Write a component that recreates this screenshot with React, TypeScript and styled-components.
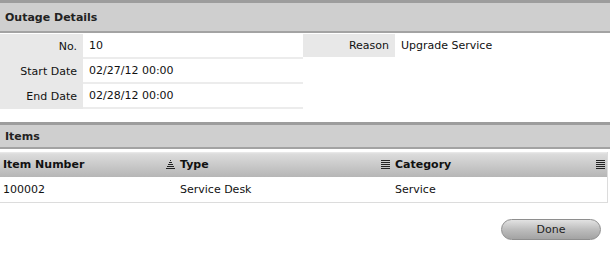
import { createGlobalStyle, styled } from "styled-components";

const GlobalStyle = createGlobalStyle`
    body {
        margin: 0;
        background: #fff;
        font-family: "DejaVu Sans", "Liberation Sans", sans-serif;
        font-size: 11px;
        color: #111;
    }
`;

const Page = styled.div`
    width: 610px;
`;

const Section = styled.section`
    margin-bottom: ${props => props.$gap || 0}px;
`;

const SectionHeader = styled.div`
    height: ${props => props.$height || 28}px;
    border-top: 3px solid #9d9d9d;
    border-bottom: 2px solid #a3a3a3;
    background: #cfcfcf;
    display: flex;
    align-items: center;
    padding-left: 5px;
    font-weight: bold;
    font-size: 11px;
    color: #222;
`;

const Details = styled.div`
    padding-top: 1px;
`;

const DetailRow = styled.div`
    display: grid;
    grid-template-columns: 83px 220px 92px 1fr;
    height: 25px;
`;

const Label = styled.div`
    background: #e8e8e8;
    display: flex;
    align-items: center;
    justify-content: flex-end;
    padding-right: 6px;
    height: ${props => props.$short ? 23 : 25}px;
`;

const Value = styled.div`
    background: #fff;
    border-bottom: 2px solid ${props => props.$plain ? "transparent" : "#ececec"};
    display: flex;
    align-items: center;
    padding-left: 6px;
    height: 23px;
`;

const Empty = styled.div``;

const Table = styled.div`
    margin-top: 3px;
    border-right: 1px solid #dcdcdc;
    border-bottom: 1px solid #dcdcdc;
    margin-right: 2px;
`;

const TableRow = styled.div`
    display: grid;
    grid-template-columns: 177px 215px 1fr;
    height: 25px;
    background: ${props => props.$head
        ? "linear-gradient(#ececec 0px, #dcdcdc 2px, #cbcbcb 12px, #b6b6b6 25px)"
        : "#fff"};
    font-weight: ${props => props.$head ? "bold" : "normal"};
`;

const Cell = styled.div`
    display: flex;
    align-items: center;
    padding-left: 3px;
`;

const HeadCell = styled(Cell)`
    justify-content: space-between;
    padding-right: 2px;
`;

const Footer = styled.div`
    display: flex;
    justify-content: flex-end;
    padding: 16px 9px 0 0;
`;

const Button = styled.button`
    width: 100px;
    height: 21px;
    border-radius: 11px;
    border: 1px solid #8e8e8e;
    background: linear-gradient(#e2e2e2, #bdbdbd 50%, #a3a3a3);
    font-family: "DejaVu Sans", sans-serif;
    font-size: 11px;
    color: #222;
    padding: 0;
`;

function SortIcon() {
    return (
        <svg width="9" height="9" viewBox="0 0 9 9">
            <rect x="4" y="0" width="1" height="1" fill="#222" />
            <rect x="3" y="2" width="3" height="1" fill="#222" />
            <rect x="2" y="4" width="5" height="1" fill="#222" />
            <rect x="1" y="6" width="7" height="1" fill="#222" />
            <rect x="0" y="8" width="9" height="1" fill="#222" />
        </svg>
    );
}

function ListIcon() {
    return (
        <svg width="9" height="9" viewBox="0 0 9 9">
            {[0, 2, 4, 6, 8].map(y => (
                <rect key={y} x="0" y={y} width="9" height="1" fill="#222" />
            ))}
        </svg>
    );
}

function App() {
    return (
        <Page>
            <GlobalStyle />
            <Section $gap={13}>
                <SectionHeader>Outage Details</SectionHeader>
                <Details>
                    <DetailRow>
                        <Label>No.</Label>
                        <Value>10</Value>
                        <Label $short>Reason</Label>
                        <Value $plain>Upgrade Service</Value>
                    </DetailRow>
                    <DetailRow>
                        <Label>Start Date</Label>
                        <Value>02/27/12 00:00</Value>
                        <Empty />
                    </DetailRow>
                    <DetailRow>
                        <Label>End Date</Label>
                        <Value>02/28/12 00:00</Value>
                        <Empty />
                    </DetailRow>
                </Details>
            </Section>
            <Section>
                <SectionHeader $height={22}>Items</SectionHeader>
                <Table>
                    <TableRow $head>
                        <HeadCell>
                            <span>Item Number</span>
                            <SortIcon />
                        </HeadCell>
                        <HeadCell>
                            <span>Type</span>
                            <ListIcon />
                        </HeadCell>
                        <HeadCell>
                            <span>Category</span>
                            <ListIcon />
                        </HeadCell>
                    </TableRow>
                    <TableRow>
                        <Cell>100002</Cell>
                        <Cell>Service Desk</Cell>
                        <Cell>Service</Cell>
                    </TableRow>
                </Table>
            </Section>
            <Footer>
                <Button>Done</Button>
            </Footer>
        </Page>
    );
}

export default App;
